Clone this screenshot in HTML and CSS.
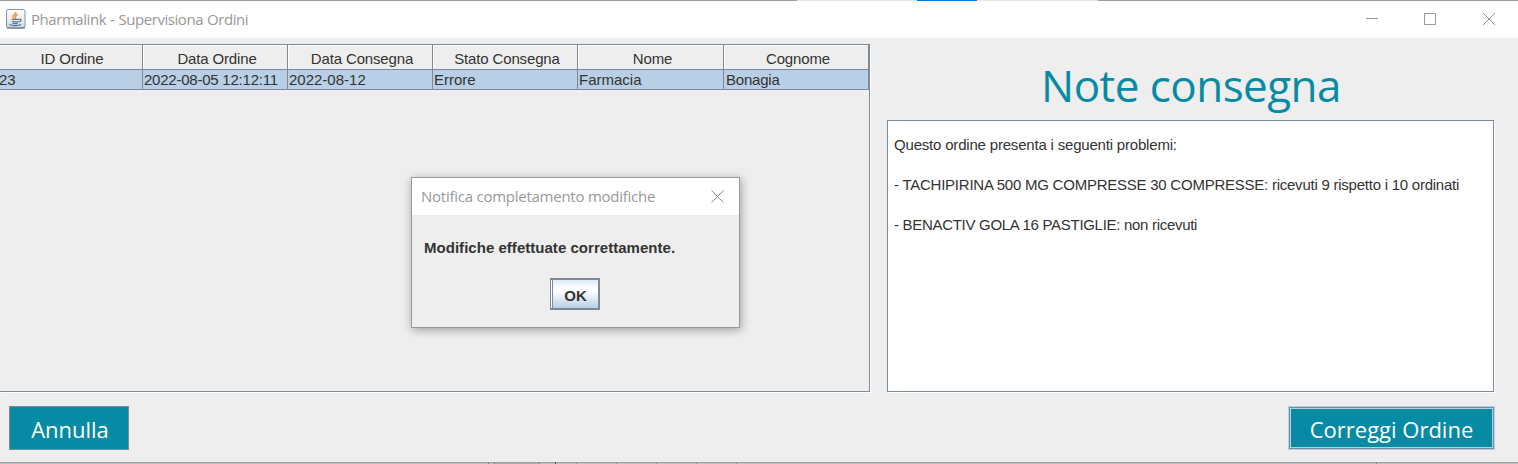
FILE: index.html
```html
<!DOCTYPE html>
<html lang="it">
<head>
<meta charset="utf-8">
<title>Pharmalink - Supervisiona Ordini</title>
<link rel="stylesheet" href="styles.css">
</head>
<body>
<div class="window">
  <header class="titlebar">
    <svg class="app-icon" width="20" height="20" viewBox="0 0 20 20">
      <defs><linearGradient id="tile" x1="0" y1="0" x2="0" y2="1"><stop offset="0" stop-color="#fdfefe"/><stop offset=".55" stop-color="#e9eef2"/><stop offset="1" stop-color="#c3d3de"/></linearGradient></defs>
      <rect x=".5" y=".5" width="18.5" height="18.5" rx="1.8" fill="url(#tile)" stroke="#8295a5"/>
      <path d="M1 19h18" stroke="#566f85"/>
      <path d="M9.800 3c.8 2-3.600 3.200-2.700 5.200.3.900 1.300 1.500 1.700 2.300M11.700 5.500c-1.600.8-2.800 1.600-2 2.900.5.800.1 1.300-.4 2" fill="none" stroke="#ee8d3e" stroke-width="1.500"/>
      <path d="M5.500 10.500h7.500M6 12.300c1.500.8 5 .8 6.500 0M6.500 14c1.500.7 4 .7 5.500 0M3.500 15.600c2 1.300 9 1.300 11.500-.1M13 10.300c2.800-.6 2.600 2-.1 2.700" fill="none" stroke="#54758f" stroke-width="1.200"/>
    </svg>
    <span class="window-title">Pharmalink - Supervisiona Ordini</span>
    <div class="controls">
      <svg width="12" height="12"><path d="M0 5.500h12" stroke="#999"/></svg>
      <svg width="12" height="12"><path d="M.5.5h11v11H.5z" fill="none" stroke="#999"/></svg>
      <svg width="12" height="12"><path d="M0 0l12 12M12 0L0 12" stroke="#8c8c8c"/></svg>
    </div>
    <div class="edge"><i class="edge-pale"></i><i class="edge-blue"></i><i class="edge-pale"></i></div>
  </header>
  <main class="content">
    <section class="orders">
      <div class="row head">
        <div>ID Ordine</div><div>Data Ordine</div><div>Data Consegna</div><div>Stato Consegna</div><div>Nome</div><div>Cognome</div>
      </div>
      <div class="row selected">
        <div>23</div><div class="date">2022-08-05 12:12:11</div><div>2022-08-12</div><div>Errore</div><div>Farmacia</div><div class="surname">Bonagia</div>
      </div>
    </section>
    <section class="notes">
      <h1><span>Note consegna</span></h1>
      <div class="notes-box">
        <p>Questo ordine presenta i seguenti problemi:</p>
        <p class="long">- TACHIPIRINA 500 MG COMPRESSE 30 COMPRESSE: ricevuti 9 rispetto i 10 ordinati</p>
        <p class="item">- BENACTIV GOLA 16 PASTIGLIE: non ricevuti</p>
      </div>
    </section>
  </main>
  <footer class="actions">
    <button class="btn cancel"><span>Annulla</span></button>
    <button class="btn fix"><span>Correggi Ordine</span></button>
  </footer>
  <div class="bottom-edge"><svg width="1518" height="2"><path d="M494 1.500h45" stroke="#adada5"/><path d="M488.500 0v2M494.500 0v2M539.500 0v2" stroke="#888"/><path d="M555.500 0v2" stroke="#555"/><path d="M576.500 1v1M616.500 1v1M656.500 1v1M696.500 1v1M736.500 1v1" stroke="#929292"/><path d="M1376.500 0v2" stroke="#a18095"/></svg></div>
  <div class="dialog">
    <div class="dialog-title"><span>Notifica completamento modifiche</span>
      <svg width="13" height="13"><path d="M.5.500l12 12M12.500.5l-12 12" stroke="#8c8c8c"/></svg>
    </div>
    <div class="dialog-body">
      <p>Modifiche effettuate correttamente.</p>
      <button class="ok">OK</button>
    </div>
  </div>
</div>
</body>
</html>
```
FILE: styles.css
```css
* { box-sizing: border-box; }
body { margin: 0; background: #eee; font-family: "Liberation Sans", Arial, sans-serif; font-size: 15px; color: #333; }
button { font: inherit; padding: 0; margin: 0; border-radius: 0; }
p { margin: 0; }
.window { position: relative; width: 1518px; height: 464px; overflow: hidden; display: flex; flex-direction: column; }
.titlebar { position: relative; height: 38px; flex: none; background: #fff; border-top: 1px solid #a0a0a0; display: flex; align-items: center; padding: 0 23px 2px 6px; }
.app-icon { margin: 1px 5px 0 0; }
.window-title { font: 15px/20px "Open Sans", sans-serif; color: #999; letter-spacing: -.45px; word-spacing: .6px; white-space: nowrap; }
.controls { margin-left: auto; display: flex; gap: 46px; }
.controls svg { display: block; }
.controls svg:nth-child(2) { margin-right: 1px; }
.edge { position: absolute; top: -1px; left: 797px; height: 1px; display: flex; }
.edge i { height: 1px; }
.edge-pale { width: 120px; background: #e6e6e6; }
.edge-blue { width: 60px; background: #0078d7; }
.edge-pale:last-child { width: 121px; }
.content { display: flex; gap: 16px; height: 355px; flex: none; }
.orders { width: 870px; height: 348px; margin-top: 6px; border: solid #7a8a99; border-width: 1px 1px 1px 0; box-shadow: 1px 1px #fff; }
.row { display: grid; grid-template-columns: 143px 145px 145px 145px 146px 145px; white-space: nowrap; }
.row div { border: 1px solid #7a8a99; border-width: 0 1px 1px 0; }
.head div { height: 25px; line-height: 28px; text-align: center; padding-left: 4px; letter-spacing: -.15px; box-shadow: inset 1px 1px #fff; }
.head div:first-child { box-shadow: inset 0 1px #fff; padding-left: 2px; }
.selected div { height: 20px; line-height: 20px; background: #b8cfe5; padding-left: 1px; }
.selected div:first-child { padding-left: 0; text-indent: -1px; }
.selected .date { letter-spacing: -.23px; }
.selected .surname { padding-left: 2px; letter-spacing: -.2px; }
.notes { width: 608px; margin-left: 1px; display: flex; flex-direction: column; }
h1 { margin: 0; height: 82px; font: 44px/94px "Open Sans", sans-serif; letter-spacing: -.55px; color: #078ba4; text-align: center; white-space: nowrap; }
.notes-box { width: 607px; height: 272px; border: 1px solid #7a8a99; background: #fff; box-shadow: 1px 1px #fff; padding: 14px 6px; display: flex; flex-direction: column; gap: 20px; line-height: 20px; letter-spacing: -.19px; white-space: nowrap; }
.notes-box .long { letter-spacing: -.24px; }
.notes-box .item { letter-spacing: -.3px; }
.actions { display: flex; justify-content: space-between; padding: 13px 23px 0 9px; height: 69px; }
.btn { height: 44px; background: #078ba4; color: #fff; font: 22px/44px "Open Sans", sans-serif; border: 1px solid #7a8a99; white-space: nowrap; }
.cancel { width: 120px; padding-left: 2px; }
.fix { width: 207px; border: 1px solid #b8cfe5; box-shadow: inset 0 0 0 1px #7a8a99, inset 0 0 0 2px #b8cfe5; }
.btn span { display: block; line-height: 46px; margin-top: -1px; }
.bottom-edge { position: absolute; left: 0; bottom: 0; width: 1518px; height: 2px; background: #c0c0c0; border-top: 1px solid #a0a0a0; }
.bottom-edge svg { display: block; margin-top: -1px; }
.dialog { position: absolute; left: 411px; top: 177px; width: 329px; height: 151px; border: 1px solid #999; background: #eee; box-shadow: 1px 2px 9px rgba(0,0,0,.34); }
.dialog-title { height: 37px; background: #fff; display: flex; align-items: center; justify-content: space-between; padding: 0 15px 2px 9px; font: 15px/20px "Open Sans", sans-serif; letter-spacing: -.25px; color: #999; white-space: nowrap; }
.dialog-title svg { margin-top: 1px; }
.dialog-body { padding: 23px 12px 0; display: flex; flex-direction: column; font-weight: bold; white-space: nowrap; }
.dialog-body p { line-height: 20px; letter-spacing: .03px; }
.ok { width: 50px; height: 32px; margin: 20px 0 0 126px; padding-left: 2px; border: 2px solid #7a8a99; border-left-width: 1px; box-shadow: inset 1px 0 #fff, inset 2px 0 #7a8a99; background: linear-gradient(#dce9f4, #fff 30%, #fff 40%, #b8cfe5); color: #333; line-height: 31px; }
```
